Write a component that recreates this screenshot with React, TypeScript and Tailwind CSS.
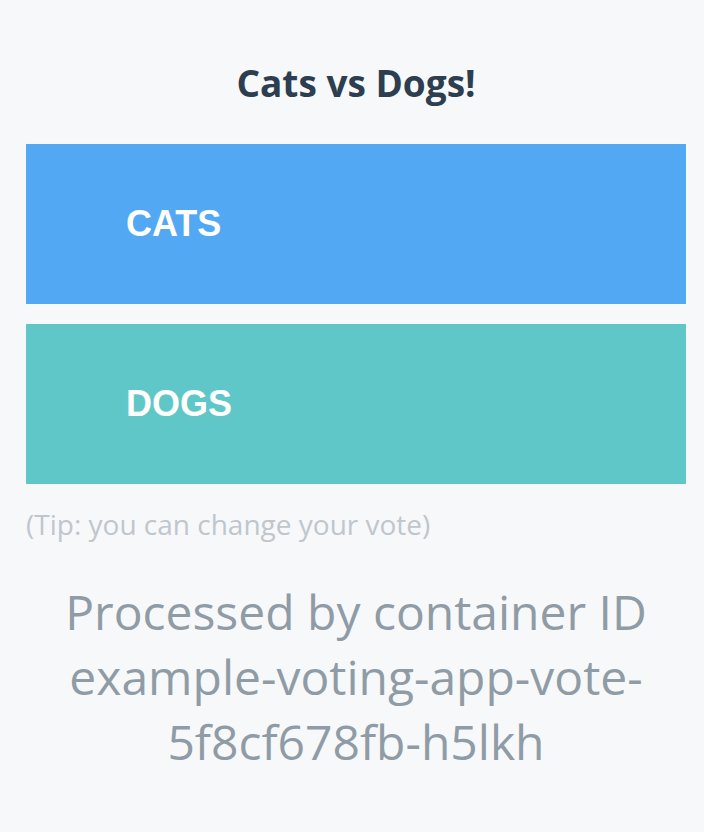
export default function App() {
  return (
    <div className="min-h-[832px] w-full bg-[#f7f8fa] pl-[26px] pr-[18px]" style={{ fontFamily: '"Open Sans", sans-serif' }}>
      <h3 className="pt-[61px] text-center text-[37px] font-bold leading-[44px] text-[#2c3e50]">Cats vs Dogs!</h3>
      <div className="mt-[39px] flex flex-col gap-[20px]">
        <button className="flex h-[160px] w-full items-center bg-[#52a8f2] pl-[100px] text-left text-[36px] font-bold text-white" style={{ fontFamily: '"Liberation Sans", Arial, sans-serif' }}>CATS</button>
        <button className="flex h-[160px] w-full items-center bg-[#5fc7c8] pl-[100px] text-left text-[36px] font-bold text-white" style={{ fontFamily: '"Liberation Sans", Arial, sans-serif' }}>DOGS</button>
      </div>
      <div className="mt-[20px] text-[28px] leading-[40px] text-[#c0c6cc]">(Tip: you can change your vote)</div>
      <div className="mt-[35px] text-center text-[48px] leading-[65px] text-[#8f9ca6]">
        Processed by container ID<br />example-voting-app-vote-<br />5f8cf678fb-h5lkh
      </div>
    </div>
  );
}
